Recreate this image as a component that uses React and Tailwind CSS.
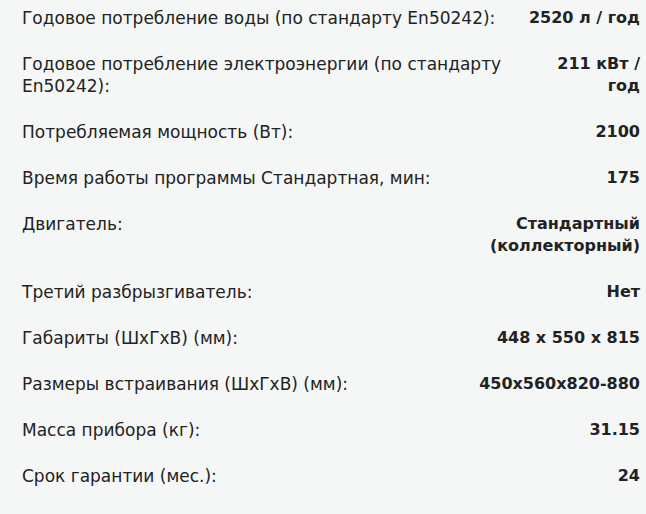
const specs = [
  { label: 'Годовое потребление воды (по стандарту En50242):', value: '2520 л / год' },
  { label: 'Годовое потребление электроэнергии (по стандарту En50242):', value: '211 кВт / год', valueClass: 'max-w-[90px]' },
  { label: 'Потребляемая мощность (Вт):', value: '2100' },
  { label: 'Время работы программы Стандартная, мин:', value: '175' },
  { label: 'Двигатель:', value: 'Стандартный (коллекторный)', valueClass: 'max-w-[160px]' },
  { label: 'Третий разбрызгиватель:', value: 'Нет' },
  { label: 'Габариты (ШхГхВ) (мм):', value: '448 x 550 x 815' },
  { label: 'Размеры встраивания (ШхГхВ) (мм):', value: '450x560x820-880' },
  { label: 'Масса прибора (кг):', value: '31.15' },
  { label: 'Срок гарантии (мес.):', value: '24' },
]

export default function App() {
  return (
    <div className="min-h-[514px] w-[646px] bg-[#f5f6f6] pl-[22px] pr-[6px] pt-[7px] font-['DejaVu_Sans',sans-serif] leading-[22px] text-[#222]">
      <div className="flex flex-col gap-6">
        {specs.map((row) => (
          <div key={row.label} className="flex items-start justify-between gap-6">
            <div className="flex-1 text-[17px]">{row.label}</div>
            <div className={'text-right text-[16px] font-bold ' + (row.valueClass || '')}>{row.value}</div>
          </div>
        ))}
      </div>
    </div>
  )
}
